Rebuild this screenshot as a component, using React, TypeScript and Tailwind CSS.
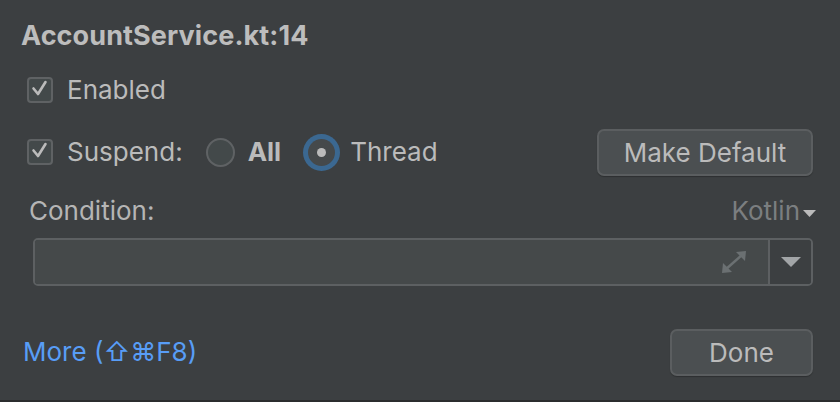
import React from "react";

const FONT = "font-['Inter','Liberation_Sans',sans-serif]";

function CheckBox() {
  return (
    <div className="flex h-[26px] w-[26px] items-center justify-center rounded-[4px] border-2 border-[#5f6264] bg-[#43494a]">
      <svg width="22" height="22" viewBox="0 0 22 22" fill="none">
        <path
          d="M4.5 9.5 L9 15 L16.5 3"
          stroke="#bbbbbb"
          strokeWidth="2.6"
          strokeLinecap="round"
          strokeLinejoin="round"
        />
      </svg>
    </div>
  );
}

function ExpandIcon() {
  return (
    <svg width="28" height="26" viewBox="0 0 28 26" fill="none">
      <path d="M5 21 L23 5" stroke="#6b7072" strokeWidth="2.4" />
      <path d="M26 2 L16 3 L25 12 Z" fill="#6b7072" />
      <path d="M2 24 L12 23 L3 14 Z" fill="#6b7072" />
    </svg>
  );
}

function Button({ label, className }: { label: string; className: string }) {
  return (
    <div
      className={`flex h-[47px] items-center justify-center rounded-[7px] border-2 border-[#5b5e60] bg-[#4b4f51] text-[26px] text-[#bbbbbb] shadow-[0_1px_1px_rgba(0,0,0,0.25)] ${className}`}
    >
      {label}
    </div>
  );
}

export default function App() {
  return (
    <div
      className={`relative flex h-[402px] w-[840px] flex-col overflow-hidden bg-[#3c3f41] ${FONT} text-[#bbbbbb]`}
    >
      {/* Title */}
      <div className="mt-[19px] flex h-[34px] items-center pl-[21px] text-[27px] font-bold tracking-[0.1px] text-[#bdbdbd]">
        AccountService.kt:14
      </div>

      {/* Enabled */}
      <div className="mt-[20px] flex h-[34px] items-center pl-[27px]">
        <CheckBox />
        <span className="ml-[14px] text-[26px] leading-none">Enabled</span>
      </div>

      {/* Suspend */}
      <div className="mt-[21px] flex h-[48px] items-center pl-[27px] pr-[27px]">
        <CheckBox />
        <span className="ml-[14px] text-[26px] leading-none">Suspend:</span>
        <div className="ml-[23px] h-[29px] w-[29px] rounded-full border-2 border-[#5f6264] bg-[#43494a]" />
        <span className="ml-[13px] text-[26px] font-bold leading-none">All</span>
        <div className="ml-[22px] flex h-[37px] w-[37px] items-center justify-center rounded-full bg-[#3b6891]">
          <div className="flex h-[27px] w-[27px] items-center justify-center rounded-full bg-[#45494b]">
            <div className="h-[9px] w-[9px] rounded-full bg-[#bbbbbb]" />
          </div>
        </div>
        <span className="ml-[10px] text-[26px] leading-none">Thread</span>
        <div className="flex-1" />
        <Button label="Make Default" className="w-[216px]" />
      </div>

      {/* Condition label */}
      <div className="mt-[20px] flex h-[30px] items-center justify-between pl-[29px] pr-[24px] text-[26px] leading-none">
        <span className="text-[#b5b5b5]">Condition:</span>
        <span className="flex items-center text-[#7b7e80]">
          Kotlin
          <svg width="13" height="8" viewBox="0 0 13 8" className="ml-[3px] mt-[6px]">
            <path d="M0 0 L13 0 L6.5 7 Z" fill="#bbbbbb" />
          </svg>
        </span>
      </div>

      {/* Condition input */}
      <div className="ml-[33px] mr-[27px] mt-[12px] flex h-[48px] overflow-hidden rounded-[5px] border-2 border-[#5d6062]">
        <div className="flex flex-1 items-center justify-end bg-[#45494a] pr-[20px]">
          <ExpandIcon />
        </div>
        <div className="flex w-[43px] items-center justify-center border-l-2 border-[#5d6062] bg-[#3c3f41]">
          <svg width="20" height="11" viewBox="0 0 20 11">
            <path d="M0 0 L20 0 L10 10 Z" fill="#a2a5a7" />
          </svg>
        </div>
      </div>

      {/* Footer */}
      <div className="mt-[42px] flex h-[48px] items-center justify-between pl-[23px] pr-[27px]">
        <span className="text-[26px] leading-none text-[#589df6]">More (⇧⌘F8)</span>
        <Button label="Done" className="w-[143px]" />
      </div>

      <div className="absolute bottom-0 left-0 h-[2px] w-full bg-[#2b2d2e]" />
    </div>
  );
}
